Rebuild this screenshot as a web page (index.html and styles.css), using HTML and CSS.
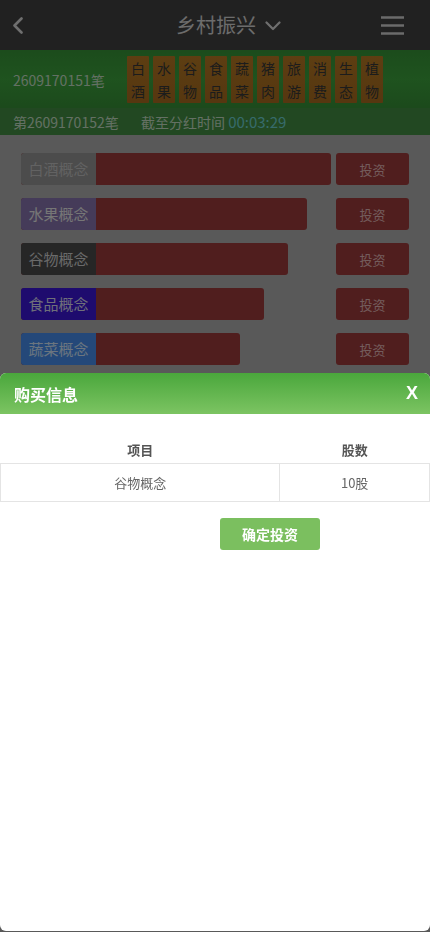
FILE: index.html
```html
<!DOCTYPE html>
<html lang="zh-CN">
<head>
<meta charset="utf-8">
<meta name="viewport" content="width=device-width, initial-scale=1">
<title>乡村振兴</title>
<link rel="stylesheet" href="styles.css">
</head>
<body>
<div class="page">
  <header class="topbar">
    <svg class="back" width="12" height="17" viewBox="0 0 12 17"><path d="M9.5 1.5 L2.5 8.5 L9.5 15.5" fill="none" stroke="#dedede" stroke-width="2.6" stroke-linecap="round" stroke-linejoin="round"/></svg>
    <div class="title">乡村振兴<svg class="down" width="16" height="10" viewBox="0 0 16 10"><path d="M1.5 1.5 L8 8 L14.5 1.5" fill="none" stroke="#dedede" stroke-width="2.2" stroke-linecap="round" stroke-linejoin="round"/></svg></div>
    <svg class="menu" width="23" height="19" viewBox="0 0 23 19"><path d="M0 1.5 H23 M0 9.5 H23 M0 17.5 H23" fill="none" stroke="#d6d6d6" stroke-width="2.4"/></svg>
  </header>
  <section class="band band-top">
    <div class="issue">2609170151笔</div>
    <div class="tiles">
      <div class="tile">白<br>酒</div>
      <div class="tile">水<br>果</div>
      <div class="tile">谷<br>物</div>
      <div class="tile">食<br>品</div>
      <div class="tile">蔬<br>菜</div>
      <div class="tile">猪<br>肉</div>
      <div class="tile">旅<br>游</div>
      <div class="tile">消<br>费</div>
      <div class="tile">生<br>态</div>
      <div class="tile">植<br>物</div>
    </div>
  </section>
  <section class="band band-sub">
    <span class="issue2">第2609170152笔</span>
    <span class="deadline">截至分红时间 <span class="timer">00:03:29</span></span>
  </section>
  <main class="list">
    <div class="row">
      <div class="track"><div class="bar" style="width:310px"><span class="label c1">白酒概念</span></div></div>
      <button class="invest">投资</button>
    </div>
    <div class="row">
      <div class="track"><div class="bar" style="width:286px"><span class="label c2">水果概念</span></div></div>
      <button class="invest">投资</button>
    </div>
    <div class="row">
      <div class="track"><div class="bar" style="width:267px"><span class="label c3">谷物概念</span></div></div>
      <button class="invest">投资</button>
    </div>
    <div class="row">
      <div class="track"><div class="bar" style="width:243px"><span class="label c4">食品概念</span></div></div>
      <button class="invest">投资</button>
    </div>
    <div class="row">
      <div class="track"><div class="bar" style="width:219px"><span class="label c5">蔬菜概念</span></div></div>
      <button class="invest">投资</button>
    </div>
  </main>
</div>
<div class="overlay"></div>
<div class="sheet">
  <div class="sheet-head">
    <span class="sheet-title">购买信息</span>
    <span class="close">X</span>
  </div>
  <table class="info">
    <thead>
      <tr><th class="col1">项目</th><th class="col2">股数</th></tr>
    </thead>
    <tbody>
      <tr><td>谷物概念</td><td>10股</td></tr>
    </tbody>
  </table>
  <div class="actions"><button class="confirm">确定投资</button></div>
</div>
</body>
</html>
```
FILE: styles.css
```css
* { box-sizing: border-box; }
html, body { margin: 0; padding: 0; }
body {
  width: 430px;
  height: 932px;
  overflow: hidden;
  background: #b2b2b2;
  font-family: "Noto Sans CJK SC", "Liberation Sans", sans-serif;
}
.page { width: 430px; }
.topbar {
  height: 50px;
  background: #434343;
  display: flex;
  align-items: center;
  justify-content: space-between;
  padding: 0 26px 0 12px;
}
.back { display: block; margin-top: 1px; }
.title {
  display: flex;
  align-items: center;
  font-size: 20px;
  color: #d8d8d8;
  margin-left: 152px;
  line-height: 50px;
}
.down { margin-left: 9px; margin-top: 2px; }
.menu { display: block; margin-left: auto; }
.band { color: #c8e0c8; font-size: 14px; }
.band-top {
  height: 58px;
  background: linear-gradient(180deg, #389838 0%, #3ea63e 50%, #389438 100%);
  display: flex;
  align-items: center;
  padding-left: 13px;
}
.issue { width: 114px; line-height: 20px; padding-top: 1px; }
.tiles { display: flex; gap: 4px; }
.tile {
  width: 22px;
  height: 47px;
  background: linear-gradient(180deg, #bb7c24 0%, #ac6e20 100%);
  color: #383838;
  font-size: 14px;
  line-height: 23px;
  text-align: center;
  padding-top: 1px;
  border-radius: 1px;
}
.band-sub {
  height: 27px;
  background: #449044;
  display: flex;
  align-items: center;
  padding-left: 13px;
}
.issue2 { width: 128px; }
.timer { color: #6ed6d6; font-size: 15px; }
.list {
  padding: 18px 21px 0 21px;
  display: flex;
  flex-direction: column;
  gap: 13px;
}
.row { display: flex; height: 32px; gap: 5px; }
.track { width: 310px; }
.bar {
  height: 32px;
  background: #a03c3c;
  border-radius: 3px;
  overflow: hidden;
  display: flex;
}
.label {
  width: 75px;
  height: 32px;
  line-height: 32px;
  text-align: center;
  font-size: 15px;
  color: #ececec;
}
.c1 { background: #989898; color: #c4c4c4; }
.c2 { background: #8a76b2; }
.c3 { background: #4c4c4c; color: #d4d4d4; }
.c4 { background: #3c16dc; color: #dedef4; }
.c5 { background: #4890f2; color: #d6eaff; }
.invest {
  width: 73px;
  height: 32px;
  border: 0;
  border-radius: 3px;
  background: #a03c3c;
  color: #e6b8b8;
  font-family: inherit;
  font-size: 13px;
  padding: 0;
}
.overlay {
  position: fixed;
  top: 0;
  left: 0;
  width: 430px;
  height: 932px;
  background: rgba(0, 0, 0, 0.5);
  z-index: 10;
}
.sheet {
  position: fixed;
  top: 373px;
  left: 0;
  width: 430px;
  height: 558px;
  background: #ffffff;
  border-radius: 6px;
  overflow: hidden;
  z-index: 20;
}
.sheet-head {
  height: 41px;
  background: linear-gradient(180deg, #4aa73c 0%, #7cc462 100%);
  display: flex;
  align-items: center;
  justify-content: space-between;
  padding: 0 12px 0 14px;
}
.sheet-title { color: #ffffff; font-size: 16px; font-weight: bold; }
.close {
  color: #ffffff;
  font-family: "Liberation Sans", sans-serif;
  font-weight: bold;
  font-size: 18px;
}
.info {
  width: 430px;
  border-collapse: collapse;
  margin-top: 22px;
  font-size: 13px;
}
.info th {
  height: 27px;
  font-weight: bold;
  color: #555555;
  padding: 0;
  line-height: 27px;
}
.col1 { width: 280px; }
.col2 { width: 150px; }
.info td {
  height: 38px;
  border: 1px solid #e4e4e4;
  text-align: center;
  color: #666666;
  padding: 0;
}
.actions { padding: 16px 0 0 220px; }
.confirm {
  width: 100px;
  height: 32px;
  border: 0;
  border-radius: 3px;
  background: #7bbf5f;
  color: #ffffff;
  font-family: inherit;
  font-weight: bold;
  font-size: 14px;
  padding: 0;
}
```
